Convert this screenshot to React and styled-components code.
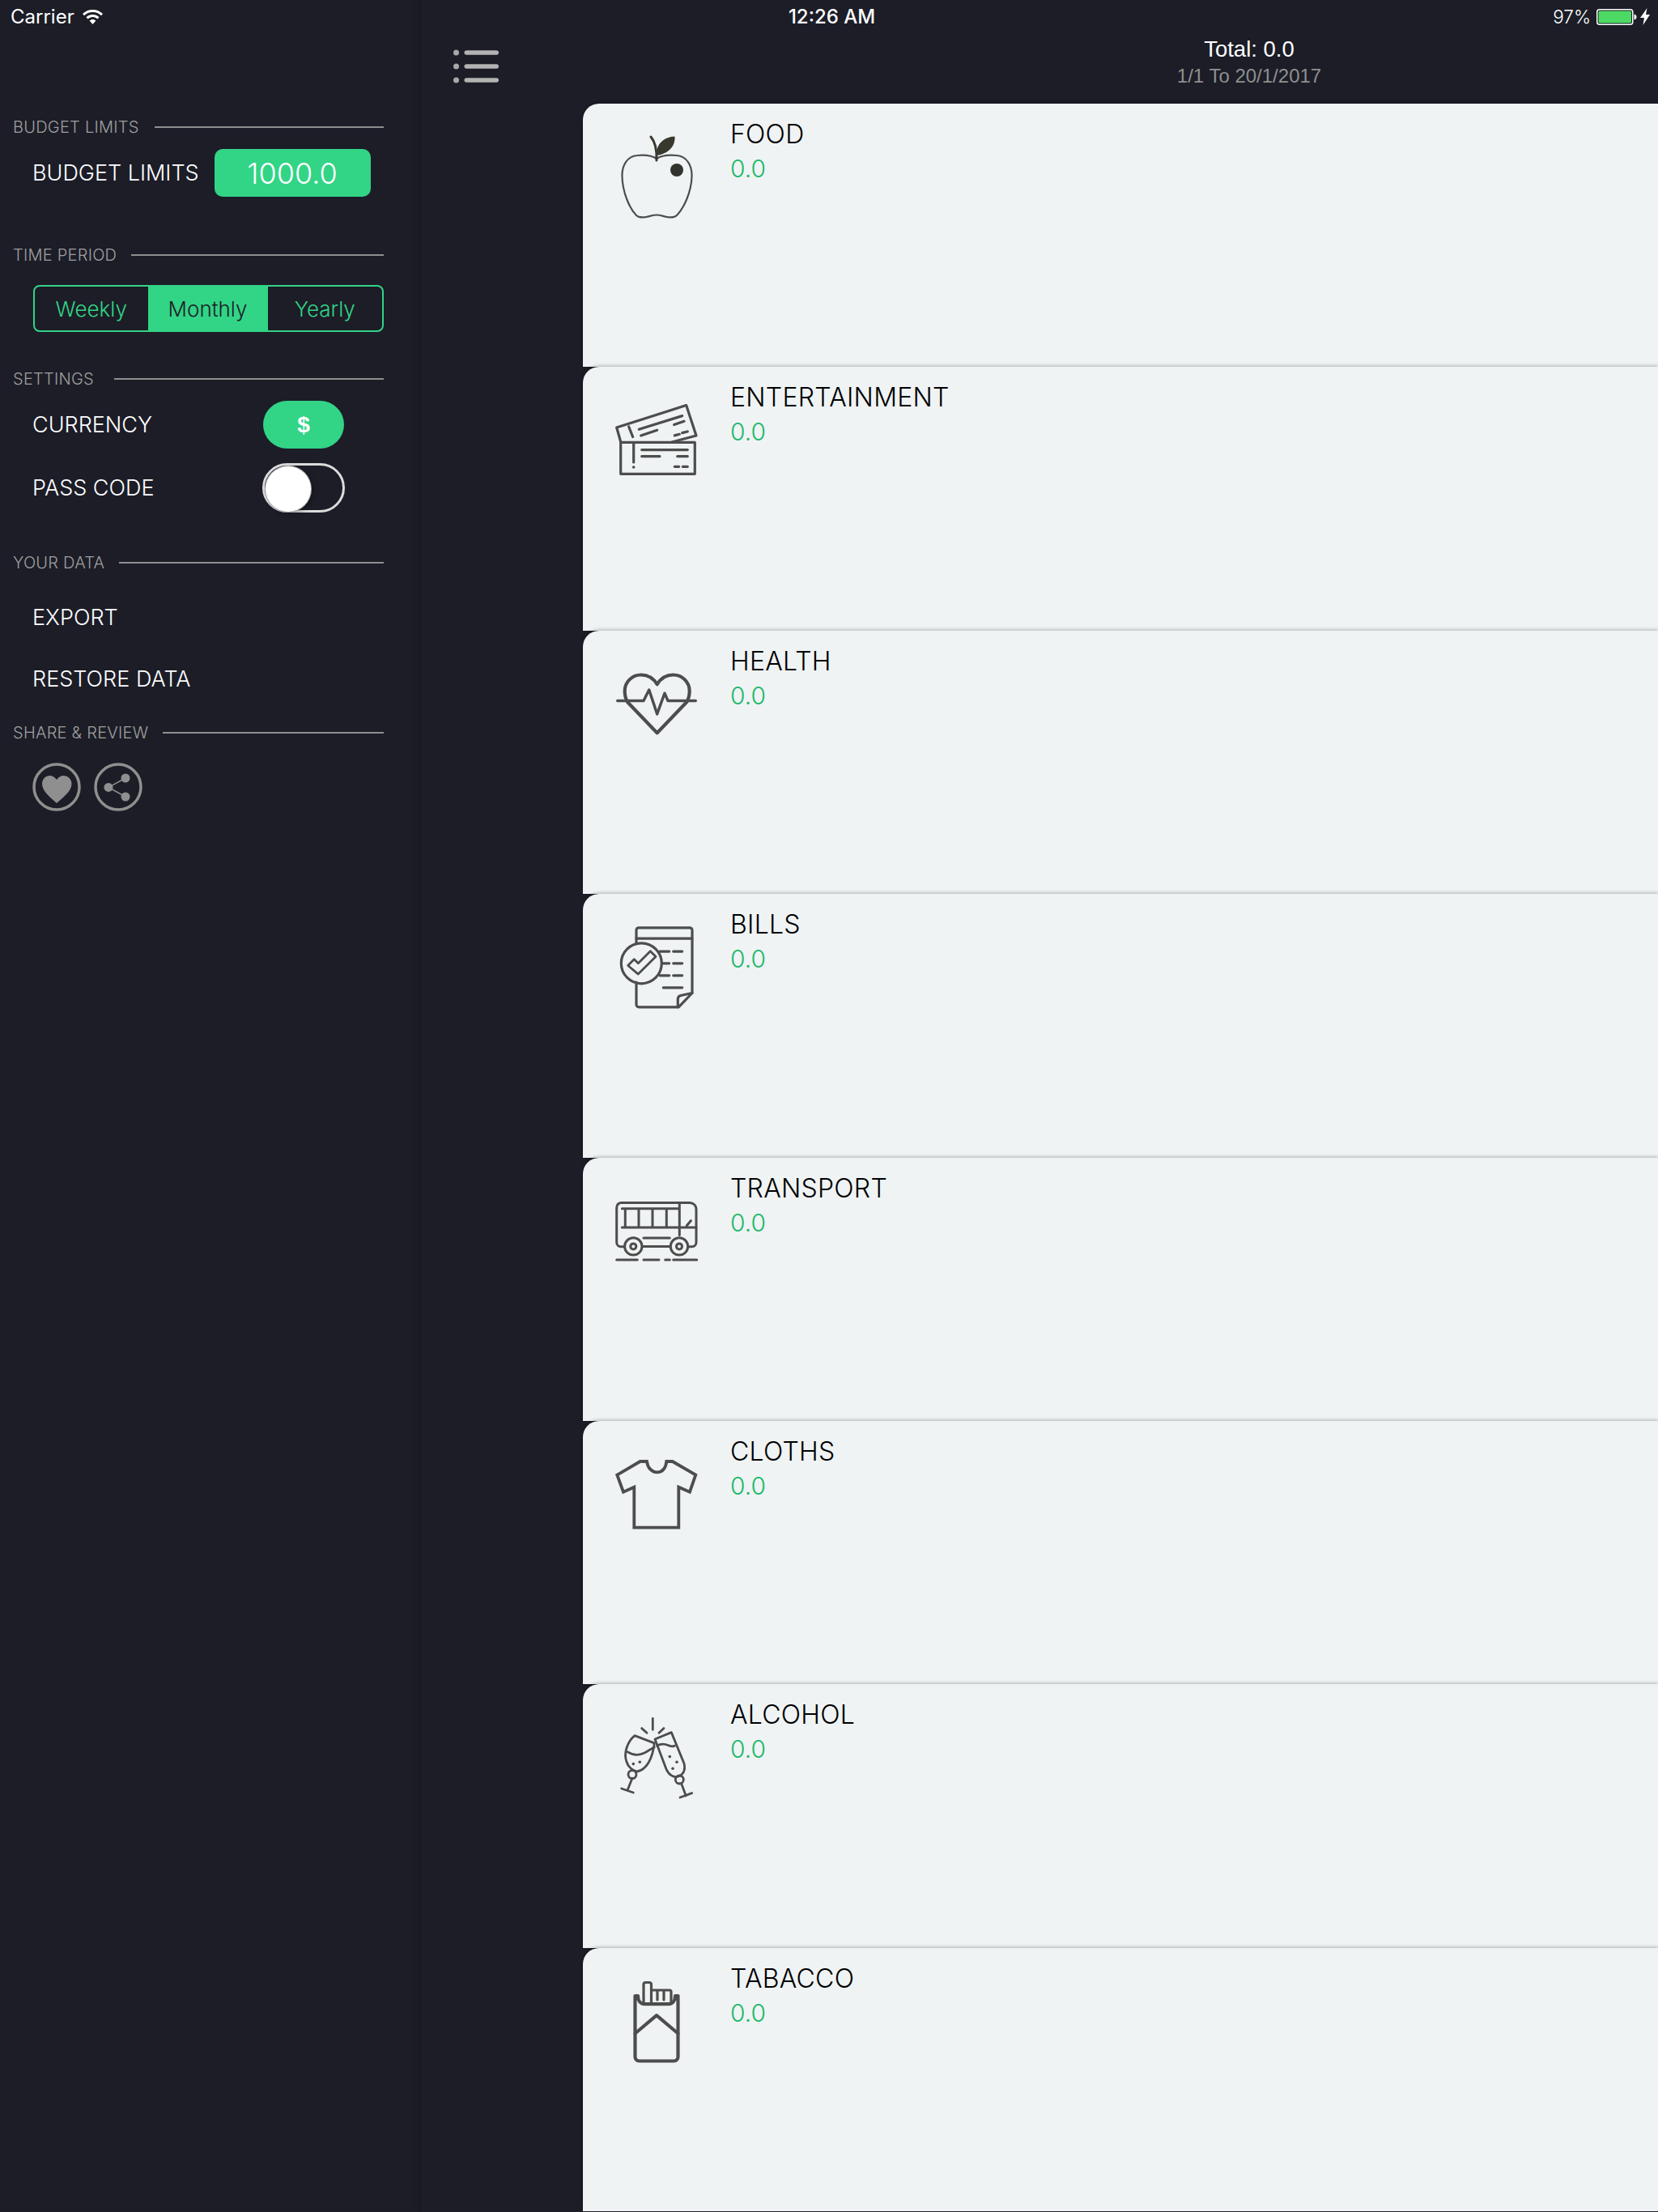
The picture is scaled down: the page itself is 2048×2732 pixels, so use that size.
import React from "react";
import styled, { createGlobalStyle } from "styled-components";

const GlobalStyle = createGlobalStyle`
  html, body {
    margin: 0;
    padding: 0;
    background: #1c1d27;
  }
  * {
    box-sizing: border-box;
  }
`;

const Page = styled.div`
  position: relative;
  width: 2048px;
  height: 2732px;
  display: flex;
  overflow: hidden;
  background: #1c1d27;
  font-family: Inter, "Liberation Sans", sans-serif;
`;

const StatusBar = styled.div`
  position: absolute;
  top: 0;
  left: 0;
  right: 0;
  height: 41px;
  z-index: 5;
  padding: 0 10px 0 13px;
  display: grid;
  grid-template-columns: 1fr auto 1fr;
  align-items: center;
  color: #fff;
  font-size: 24px;
`;

const StatusLeft = styled.div`
  display: flex;
  align-items: center;
  gap: 10px;
`;

const StatusTime = styled.div`
  font-weight: 500;
  font-size: 24px;
  margin-left: 4px;
`;

const StatusRight = styled.div`
  display: flex;
  align-items: center;
  justify-content: flex-end;
  gap: 4px;
`;

const Percent = styled.span`
  font-size: 22.5px;
  font-weight: 300;
  margin-right: 3px;
`;

const Sidebar = styled.aside`
  width: 520px;
  flex: none;
  padding: 143px 46px 0 16px;
  box-shadow: inset -8px 0 8px -6px rgba(0, 0, 0, 0.22);
`;

const SectionHead = styled.div`
  display: flex;
  align-items: center;
  gap: ${(p) => p.$gap || 18}px;
  height: 28px;
  margin-top: ${(p) => p.$top}px;
  color: #a0a0a0;
  font-size: 20px;
  font-weight: 300;
  letter-spacing: 0.25px;
  white-space: nowrap;
  &::after {
    content: "";
    flex: 1;
    height: 2px;
    background: #8f8f8f;
  }
`;

const Row = styled.div`
  display: flex;
  align-items: center;
  height: ${(p) => p.$h || 60}px;
  margin-top: ${(p) => p.$top || 0}px;
  padding-left: 24px;
  color: #fff;
  font-size: 27px;
  font-weight: 300;
  white-space: nowrap;
`;

const RowLabel = styled.span`
  width: ${(p) => p.$w}px;
  flex: none;
`;

const BudgetButton = styled.div`
  width: 193px;
  height: 59px;
  border-radius: 10px;
  background: #32d486;
  color: #fff;
  font-size: 36px;
  font-weight: 300;
  display: flex;
  align-items: center;
  justify-content: center;
`;

const Segments = styled.div`
  margin: 23px 0 0 25px;
  height: 58px;
  display: grid;
  grid-template-columns: 139.5px 148px 1fr;
  border: 2px solid #32d486;
  border-radius: 8px;
  overflow: hidden;
`;

const Segment = styled.div`
  display: flex;
  align-items: center;
  justify-content: center;
  font-size: 26px;
  font-weight: 300;
  color: ${(p) => (p.$active ? "#1c1d27" : "#32d486")};
  background: ${(p) => (p.$active ? "#32d486" : "transparent")};
`;

const CurrencyPill = styled.div`
  width: 100px;
  height: 59px;
  border-radius: 30px;
  background: #32d486;
  color: #fff;
  font-family: "Liberation Sans", sans-serif;
  font-size: 28px;
  font-weight: 700;
  display: flex;
  align-items: center;
  justify-content: center;
`;

const Toggle = styled.div`
  width: 102px;
  height: 61px;
  border-radius: 31px;
  border: 3px solid #dcdcdc;
  padding: 1px;
`;

const Knob = styled.div`
  width: 56px;
  height: 56px;
  border-radius: 50%;
  background: #fff;
  box-shadow: 0 0 0 1px #a8a8a8, 3px 2px 6px rgba(0, 0, 0, 0.35);
`;

const ShareRow = styled.div`
  display: flex;
  gap: 16px;
  margin: 23px 0 0 24px;
`;

const Main = styled.main`
  flex: 1;
  min-width: 0;
  display: flex;
  flex-direction: column;
`;

const Header = styled.header`
  height: 128px;
  flex: none;
  padding: 61px 0 0 40px;
  display: flex;
  align-items: flex-start;
`;

const Title = styled.div`
  width: 1010px;
  margin: -18px 0 0 auto;
  text-align: center;
  font-family: "Liberation Sans", sans-serif;
`;

const Total = styled.div`
  color: #fff;
  font-size: 27.5px;
  line-height: 36px;
`;

const DateRange = styled.div`
  color: #8f8f8f;
  font-size: 24px;
  line-height: 30px;
`;

const List = styled.div`
  margin-left: 200px;
`;

const Card = styled.section`
  height: 325.4px;
  display: flex;
  padding-top: 38px;
  background: #eff3f4;
  border-radius: 20px 0 0 0;
  box-shadow: 0 -1px 4px rgba(0, 0, 0, 0.28);
`;

const IconBox = styled.div`
  width: 182px;
  flex: none;
  padding-left: 40px;
  svg {
    display: block;
  }
`;

const CardName = styled.div`
  margin-top: -24px;
  font-size: 32px;
  line-height: 48px;
  font-weight: 350;
  letter-spacing: 0.25px;
  color: #000;
`;

const CardValue = styled.div`
  font-size: 30px;
  line-height: 36px;
  font-weight: 300;
  color: #1fb96b;
`;

const CategoryIcon = ({ children, width = 3.2 }) => (
  <svg
    width="104"
    height="104"
    viewBox="0 0 104 104"
    fill="none"
    stroke="#4d4d4d"
    strokeWidth={width}
    strokeLinecap="round"
    strokeLinejoin="round"
  >
    {children}
  </svg>
);

const icons = {
  food: (
    <CategoryIcon width={2.2}>
      <path d="M51 30C45 26 36 25 27 26C15 27 8 38 8.5 52C9 72 18 92 26 100C29 103 33 102.5 38 102C43 101 47 99.5 51 99.5C55 99.5 59 101 64 102C69 102.5 73 103 76 100C84 92 94 72 94.5 52C95 38 88 27 76 26C66 25 57 26 51 30Z" />
      <path d="M51 32C51.5 20 50 10 44 3" stroke="#38382f" strokeWidth="3" />
      <path d="M51 26C50 12 60 3 73.5 2.5C74.5 14 66 24 51 26Z" fill="#38382f" stroke="none" />
      <circle cx="76" cy="44" r="8" fill="#33332e" stroke="none" />
    </CategoryIcon>
  ),
  entertainment: (
    <CategoryIcon width={3.2}>
      <path d="M6.5 54L1.7 37L87.7 9.6L100 47L70 55" />
      <path d="M16.7 36L21.7 48.6M29.3 39.3L82.7 22.6M31.7 47L51.7 40.3M72.7 33.6L85 29.3M73.3 46.9L79.3 45.3M82.7 43.6L89.3 42" />
      <rect x="6.7" y="55.3" width="91.6" height="39" />
      <path d="M22.7 57V80M32.7 64.6H89.3M32.7 72.6H55M76.7 72.6H89.3M73.3 85.3H78.7M83.3 85.3H89.3" />
      <circle cx="22.7" cy="86" r="1.8" fill="#4d4d4d" stroke="none" />
    </CategoryIcon>
  ),
  health: (
    <CategoryIcon width={4.2}>
      <path d="M15 50C12.8 46 11.7 41.5 11.7 36.5C11.7 25.5 20.5 16.5 32 16.5C40 16.5 47 20.5 51.7 28.2C56.4 20.5 63.4 16.5 71.4 16.5C82.9 16.5 91.7 25.5 91.7 36.5C91.7 41.5 90.6 46 88.3 50L51.7 88.2Z" />
      <path d="M2.7 48.5H35L41.7 34.9L51.7 64.9L61 39.2L65 48.5H99.3" strokeWidth="3.4" />
    </CategoryIcon>
  ),
  bills: (
    <CategoryIcon width={3.2}>
      <path d="M26 22.8V6.8A3 3 0 0 1 29 3.8H92A3 3 0 0 1 95 6.8V84.5L78.3 101.8H29A3 3 0 0 1 26 98.8V71" />
      <path d="M26 17.1H95M95 84.5L81 87.5C78.5 88 77.3 89.5 77.3 92V101.8" />
      <circle cx="32.3" cy="47.8" r="25" />
      <path d="M15.7 50.5L23.3 42.8L28.3 47.8L43.3 32.8L50 39.5L28.3 61.1Z" strokeWidth="2.8" />
      <path d="M55 33.1H66.7M71.7 33.1H82.7M58.3 47.8H66.7M71.7 47.8H82.7M55 62.8H66.7M71.7 62.8H82.7M59.3 77.8H82.7" />
    </CategoryIcon>
  ),
  transport: (
    <CategoryIcon width={3}>
      <path d="M11 71.7H7A5.3 5.3 0 0 1 1.7 66.4V23.4A6 6 0 0 1 7.7 17.4H92A8 8 0 0 1 100 25.4V66.4A5.3 5.3 0 0 1 94.7 71.7H90.5" />
      <path d="M8.3 24.7H78.3M8.3 48H100M12.3 24.7V48M29 24.7V48M46 24.7V48M63.3 24.7V48M79.3 17.4V57.4M88.3 45.7L93.3 39.7" />
      <circle cx="22.3" cy="71.4" r="10.7" />
      <circle cx="22.3" cy="71.4" r="3.5" />
      <circle cx="79" cy="71.4" r="10.7" />
      <circle cx="79" cy="71.4" r="3.5" />
      <path d="M35 61H67.3M34 71.4H67.3M1.7 88H27.3M35 88H54M61.7 88H67.3M71.7 88H100.7" />
    </CategoryIcon>
  ),
  cloths: (
    <CategoryIcon width={3.8}>
      <path
        d="M2.3 28.7L30.7 12H39C40 20 45 25.3 51.7 25.3C58.4 25.3 62.5 20 63.3 12H70.7L99.3 28.7L92 49.7L78.3 43.7V93.7H23.3V43.7L10 49.7Z"
        strokeLinecap="butt"
        strokeLinejoin="miter"
      />
    </CategoryIcon>
  ),
  alcohol: (
    <CategoryIcon width={2.8}>
      <path d="M46.3 4.3V18.3M32.7 16.6L39 22.3M60 16.6L54 22.3" />
      <path d="M24 25.6C15 33 10 47 14 58C16 65 22 69 27 70C38 68 46 55 48.3 34.9Z" />
      <path d="M15 45.6C22 50 30 50 36 47C40 45 44 42 48.3 40" />
      <circle cx="21" cy="73.6" r="5" />
      <path d="M21 78.3L15 93.3M7.7 91L22.3 96" />
      <path d="M49 30L69.3 21.6L85 60C87 68 84 74 78 76C72 78 66 74 63 67Z" />
      <path d="M51.7 38.3C56 35 62 36 65 37.5C68 39 71 39 73.3 38.3" />
      <circle cx="79.3" cy="80" r="5" />
      <path d="M81.7 85L87.3 100M80 102L94.7 96.6" />
      <g fill="#4d4d4d" stroke="none">
        <circle cx="22.3" cy="60.6" r="1.8" />
        <circle cx="30.3" cy="58.3" r="1.8" />
        <circle cx="67.3" cy="51.6" r="1.8" />
        <circle cx="76" cy="58.3" r="1.8" />
        <circle cx="71" cy="66.3" r="1.8" />
      </g>
    </CategoryIcon>
  ),
  tabacco: (
    <CategoryIcon width={4.2}>
      <path d="M24.5 21H28C28 27 31 31.2 36 31.2H66C71 31.2 74 27 74 21H77.5V96.5A5 5 0 0 1 72.5 101.5H29.5A5 5 0 0 1 24.5 96.5Z" />
      <path d="M35 30V7A2.5 2.5 0 0 1 37.5 4.5H42A2.5 2.5 0 0 1 44.5 7V30M44.5 14H67A2 2 0 0 1 69 16V30M52 15V26M60 15V26" strokeWidth="3.2" />
      <path d="M24.5 67.5L51 45.2L77.5 67.5" />
    </CategoryIcon>
  ),
};

const categories = [
  { key: "food", name: "FOOD" },
  { key: "entertainment", name: "ENTERTAINMENT" },
  { key: "health", name: "HEALTH" },
  { key: "bills", name: "BILLS" },
  { key: "transport", name: "TRANSPORT" },
  { key: "cloths", name: "CLOTHS" },
  { key: "alcohol", name: "ALCOHOL" },
  { key: "tabacco", name: "TABACCO" },
];

export default function App() {
  return (
    <>
      <GlobalStyle />
      <Page>
        <StatusBar>
          <StatusLeft>
            <span>Carrier</span>
            <svg width="25" height="18" viewBox="0 0 25 18" fill="#fff">
              <path d="M12.5 0C7.6 0 3.4 1.9 0 5L2 7.2C4.8 4.6 8.4 3 12.5 3C16.6 3 20.2 4.6 23 7.2L25 5C21.6 1.9 17.4 0 12.5 0Z" />
              <path d="M12.5 6C9.4 6 6.7 7.2 4.5 9.2L6.6 11.4C8.2 10 10.2 9 12.5 9C14.8 9 16.8 10 18.4 11.4L20.5 9.2C18.3 7.2 15.6 6 12.5 6Z" />
              <path d="M12.5 12C10.9 12 9.6 12.6 8.6 13.5L12.5 18L16.4 13.5C15.4 12.6 14.1 12 12.5 12Z" />
            </svg>
          </StatusLeft>
          <StatusTime>12:26 AM</StatusTime>
          <StatusRight>
            <Percent>97%</Percent>
            <svg width="50" height="20" viewBox="0 0 50 20">
              <rect x="0.75" y="0.75" width="44" height="18.5" rx="3" fill="none" stroke="#fff" strokeWidth="1.5" />
              <rect x="2.5" y="2.5" width="40.5" height="15" rx="1.5" fill="#4cd964" />
              <path d="M46.5 6.5C48.5 7 49.5 8 49.5 10C49.5 12 48.5 13 46.5 13.5Z" fill="#fff" />
            </svg>
            <svg width="12" height="21" viewBox="0 0 12 21" fill="#fff">
              <path d="M8.5 0L0 12H5L3.5 21L12 8H7Z" />
            </svg>
          </StatusRight>
        </StatusBar>

        <Sidebar>
          <SectionHead $top={0} $gap={19}>BUDGET LIMITS</SectionHead>
          <Row $h={59} $top={13}>
            <RowLabel $w={224.5}>BUDGET LIMITS</RowLabel>
            <BudgetButton>1000.0</BudgetButton>
          </Row>

          <SectionHead $top={58}>TIME PERIOD</SectionHead>
          <Segments>
            <Segment>Weekly</Segment>
            <Segment $active>Monthly</Segment>
            <Segment>Yearly</Segment>
          </Segments>

          <SectionHead $top={44} $gap={25}>SETTINGS</SectionHead>
          <Row $h={59} $top={13}>
            <RowLabel $w={285}>CURRENCY</RowLabel>
            <CurrencyPill>$</CurrencyPill>
          </Row>
          <Row $h={61} $top={18}>
            <RowLabel $w={284}>PASS CODE</RowLabel>
            <Toggle>
              <Knob />
            </Toggle>
          </Row>

          <SectionHead $top={48}>YOUR DATA</SectionHead>
          <Row $top={23}>EXPORT</Row>
          <Row $top={16}>RESTORE DATA</Row>
          <SectionHead $top={23}>SHARE &amp; REVIEW</SectionHead>
          <ShareRow>
            <svg width="60" height="60" viewBox="0 0 60 60">
              <circle cx="30" cy="30" r="28" fill="none" stroke="#8f8f8f" strokeWidth="3.5" />
              <path d="M30 50C24 44 12 36 12 26C12 20 16.5 16 21.5 16C25 16 28 18 30 21C32 18 35 16 38.5 16C43.5 16 48.5 20 48.5 26C48.5 36 36 44 30 50Z" fill="#8f8f8f" />
            </svg>
            <svg width="60" height="60" viewBox="0 0 60 60">
              <circle cx="30" cy="30" r="28" fill="none" stroke="#8f8f8f" strokeWidth="3.5" />
              <path d="M39 19L18 30.4L39 42" fill="none" stroke="#8f8f8f" strokeWidth="1.5" />
              <circle cx="39" cy="19" r="5.5" fill="#8f8f8f" />
              <circle cx="18" cy="30.4" r="5.5" fill="#8f8f8f" />
              <circle cx="39" cy="42" r="5.5" fill="#8f8f8f" />
            </svg>
          </ShareRow>
        </Sidebar>

        <Main>
          <Header>
            <svg width="56" height="42" viewBox="0 0 56 42">
              <g fill="#a8a8a8">
                <circle cx="3.5" cy="4" r="3.5" />
                <circle cx="3.5" cy="21" r="3.5" />
                <circle cx="3.5" cy="38" r="3.5" />
              </g>
              <g fill="#b3b3b3">
                <rect x="13.5" y="1.2" width="42.5" height="5.6" rx="2.8" />
                <rect x="13.5" y="18.2" width="42.5" height="5.6" rx="2.8" />
                <rect x="13.5" y="35.2" width="42.5" height="5.6" rx="2.8" />
              </g>
            </svg>
            <Title>
              <Total>Total: 0.0</Total>
              <DateRange>1/1 To 20/1/2017</DateRange>
            </Title>
          </Header>
          <List>
            {categories.map((c) => (
              <Card key={c.key}>
                <IconBox>{icons[c.key]}</IconBox>
                <div>
                  <CardName>{c.name}</CardName>
                  <CardValue>0.0</CardValue>
                </div>
              </Card>
            ))}
          </List>
        </Main>
      </Page>
    </>
  );
}
